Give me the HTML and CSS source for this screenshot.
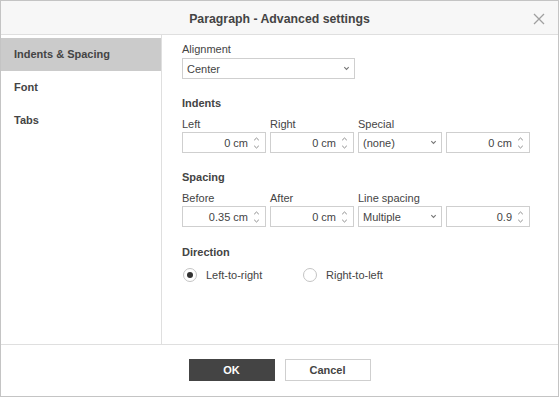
FILE: index.html
```html
<!DOCTYPE html>
<html>
<head>
<meta charset="utf-8">
<link rel="stylesheet" href="styles.css">
</head>
<body>
<div class="dialog">
  <div class="header">
    <div class="title">Paragraph - Advanced settings</div>
    <div class="close"><svg width="12" height="12" viewBox="0 0 12 12"><path d="M1 1L11 11M11 1L1 11" stroke="#a0a0a0" stroke-width="1.3" fill="none"/></svg></div>
  </div>
  <div class="main">
    <div class="sidebar">
      <div class="nav active">Indents &amp; Spacing</div>
      <div class="nav">Font</div>
      <div class="nav">Tabs</div>
    </div>
    <div class="content">
      <div class="label">Alignment</div>
      <div class="select wide"><span>Center</span><svg class="chev" width="7" height="5" viewBox="0 0 7 5"><path d="M1.3 1.2L3.5 3.5L5.7 1.2" stroke="#777" stroke-width="1.1" fill="none"/></svg></div>

      <div class="section">Indents</div>
      <div class="grid">
        <div class="field"><div class="label">Left</div><div class="spin"><span>0 cm</span><svg class="arrows" width="7" height="14" viewBox="0 0 7 14"><path d="M1.2 4.2L3.5 2L5.8 4.2M1.2 9.8L3.5 12L5.8 9.8" stroke="#8a8a8a" stroke-width="1" fill="none"/></svg></div></div>
        <div class="field"><div class="label">Right</div><div class="spin"><span>0 cm</span><svg class="arrows" width="7" height="14" viewBox="0 0 7 14"><path d="M1.2 4.2L3.5 2L5.8 4.2M1.2 9.8L3.5 12L5.8 9.8" stroke="#8a8a8a" stroke-width="1" fill="none"/></svg></div></div>
        <div class="field"><div class="label">Special</div><div class="select"><span>(none)</span><svg class="chev" width="7" height="5" viewBox="0 0 7 5"><path d="M1.3 1.2L3.5 3.5L5.7 1.2" stroke="#777" stroke-width="1.1" fill="none"/></svg></div></div>
        <div class="field"><div class="label">&nbsp;</div><div class="spin"><span>0 cm</span><svg class="arrows" width="7" height="14" viewBox="0 0 7 14"><path d="M1.2 4.2L3.5 2L5.8 4.2M1.2 9.8L3.5 12L5.8 9.8" stroke="#8a8a8a" stroke-width="1" fill="none"/></svg></div></div>
      </div>

      <div class="section">Spacing</div>
      <div class="grid">
        <div class="field"><div class="label">Before</div><div class="spin"><span>0.35 cm</span><svg class="arrows" width="7" height="14" viewBox="0 0 7 14"><path d="M1.2 4.2L3.5 2L5.8 4.2M1.2 9.8L3.5 12L5.8 9.8" stroke="#8a8a8a" stroke-width="1" fill="none"/></svg></div></div>
        <div class="field"><div class="label">After</div><div class="spin"><span>0 cm</span><svg class="arrows" width="7" height="14" viewBox="0 0 7 14"><path d="M1.2 4.2L3.5 2L5.8 4.2M1.2 9.8L3.5 12L5.8 9.8" stroke="#8a8a8a" stroke-width="1" fill="none"/></svg></div></div>
        <div class="field"><div class="label">Line spacing</div><div class="select"><span>Multiple</span><svg class="chev" width="7" height="5" viewBox="0 0 7 5"><path d="M1.3 1.2L3.5 3.5L5.7 1.2" stroke="#777" stroke-width="1.1" fill="none"/></svg></div></div>
        <div class="field"><div class="label">&nbsp;</div><div class="spin"><span>0.9</span><svg class="arrows" width="7" height="14" viewBox="0 0 7 14"><path d="M1.2 4.2L3.5 2L5.8 4.2M1.2 9.8L3.5 12L5.8 9.8" stroke="#8a8a8a" stroke-width="1" fill="none"/></svg></div></div>
      </div>

      <div class="section dir">Direction</div>
      <div class="radios">
        <div class="radio"><span class="circle checked"></span><span>Left-to-right</span></div>
        <div class="radio"><span class="circle"></span><span>Right-to-left</span></div>
      </div>
    </div>
  </div>
  <div class="footer">
    <button class="btn primary">OK</button>
    <button class="btn">Cancel</button>
  </div>
</div>
</body>
</html>
```
FILE: styles.css
```css
html, body {
  margin: 0;
  padding: 0;
  background: #fff;
}
body {
  font-family: "Liberation Sans", Arial, sans-serif;
  font-size: 11px;
  color: #444;
}
.dialog {
  box-sizing: border-box;
  width: 559px;
  height: 397px;
  border: 1px solid #c4c4c4;
  display: flex;
  flex-direction: column;
  background: #fff;
}
.header {
  position: relative;
  height: 33px;
  flex: none;
  background: #f7f7f7;
  border-bottom: 1px solid #dfdfdf;
  display: flex;
  align-items: center;
  justify-content: center;
}
.title {
  font-size: 12.3px;
  font-weight: bold;
  color: #444;
  margin-top: 2px;
}
.close {
  position: absolute;
  right: 13px;
  top: 12px;
  width: 12px;
  height: 12px;
  line-height: 0;
}
.main {
  flex: 1;
  display: flex;
  border-bottom: 1px solid #dfdfdf;
}
.sidebar {
  width: 160px;
  flex: none;
  border-right: 1px solid #dfdfdf;
  padding-top: 3px;
}
.nav {
  height: 33px;
  line-height: 33px;
  padding-left: 13px;
  font-weight: bold;
  color: #444;
}
.nav.active {
  background: #cbcbcb;
}
.content {
  padding: 8px 0 0 20px;
}
.label {
  line-height: 13px;
  height: 13px;
  margin-bottom: 1px;
  color: #444;
}
.content > .label {
  margin-bottom: 2px;
}
.section {
  font-weight: bold;
  line-height: 13px;
  margin-top: 18px;
  margin-bottom: 8px;
}
.section.dir {
  margin-top: 19px;
}
.grid {
  display: grid;
  grid-template-columns: 84px 84px 84px 84px;
  column-gap: 4px;
}
.select, .spin {
  box-sizing: border-box;
  height: 21px;
  border: 1px solid #cfcfcf;
  background: #fff;
  display: flex;
  align-items: center;
  position: relative;
}
.select {
  padding-left: 4px;
  padding-right: 4px;
  justify-content: space-between;
}
.select.wide {
  width: 173px;
}
.spin {
  justify-content: flex-end;
  padding-right: 5px;
}
.spin span {
  margin-right: 5px;
}
.chev, .arrows {
  display: block;
}
.radios {
  display: flex;
  margin-top: 5px;
  height: 16px;
  align-items: center;
}
.radio {
  display: flex;
  align-items: center;
  width: 120px;
}
.circle {
  box-sizing: border-box;
  width: 14px;
  height: 14px;
  border: 1px solid #c4c4c4;
  border-radius: 50%;
  margin-left: 1px;
  margin-right: 9px;
  position: relative;
  background: #fff;
}
.circle.checked::after {
  content: "";
  position: absolute;
  left: 3px;
  top: 3px;
  width: 6px;
  height: 6px;
  border-radius: 50%;
  background: #333;
}
.footer {
  height: 51px;
  flex: none;
  display: flex;
  justify-content: center;
  align-items: flex-start;
  padding-top: 14px;
  box-sizing: border-box;
  gap: 10px;
}
.btn {
  box-sizing: border-box;
  width: 86px;
  height: 22px;
  border: 1px solid #cfcfcf;
  background: #fff;
  color: #444;
  font-family: "Liberation Sans", Arial, sans-serif;
  font-size: 11px;
  font-weight: bold;
  padding: 0;
}
.btn.primary {
  background: #444;
  border-color: #444;
  color: #fff;
}
```
